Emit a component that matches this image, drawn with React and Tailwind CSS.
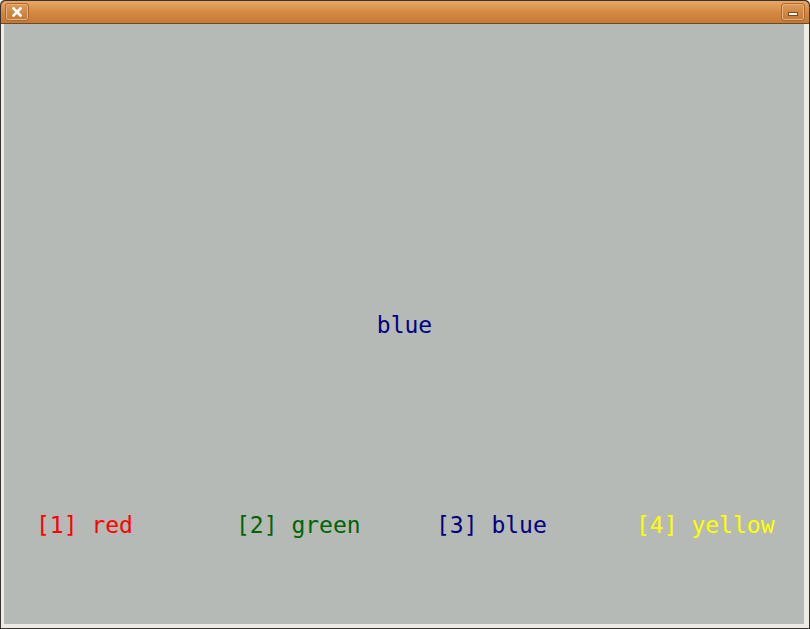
import React from "react";

const items = [
  { key: "1", label: "red", color: "text-[#ff0000]" },
  { key: "2", label: "green", color: "text-[#006400]" },
  { key: "3", label: "blue", color: "text-[#000080]" },
  { key: "4", label: "yellow", color: "text-[#ffff00]" },
];

const App = () => {
  return (
    <div className="w-[810px] h-[629px] flex flex-col bg-[#3a3430] rounded-t-[5px] overflow-hidden font-['DejaVu_Sans_Mono',monospace]">
      {/* title bar */}
      <div className="h-[23px] shrink-0 flex items-center justify-between px-[4px] border-b border-[#6b4a24] bg-gradient-to-b from-[#e9a767] via-[#d58a42] to-[#c47a36] rounded-t-[5px] mx-[1px] mt-[1px]">
        <div className="w-[24px] h-[18px] rounded-[3px] border border-[#a86a30] bg-gradient-to-b from-[#dc9a58] to-[#c47a38] shadow-[inset_0_0_0_1px_#eab07a] flex items-center justify-center">
          <svg width="10" height="10" viewBox="0 0 10 10">
            <path d="M1.5 1.5 L8.5 8.5 M8.5 1.5 L1.5 8.5" stroke="#fff" strokeWidth="2.6" strokeLinecap="square" />
          </svg>
        </div>
        <div className="w-[24px] h-[18px] rounded-[3px] border border-[#a86a30] bg-gradient-to-b from-[#dc9a58] to-[#c47a38] shadow-[inset_0_0_0_1px_#eab07a] flex items-end justify-center pb-[4px]">
          <div className="w-[10px] h-[4px] bg-white border border-[#7a4a1c]" />
        </div>
      </div>

      {/* window body */}
      <div className="flex-1 flex ml-[1px] mr-[1px] mb-[1px] bg-[#ecebe4] pl-[3px] pr-[5px] pb-[4px]">
        <div className="w-[800px] min-w-0 overflow-hidden flex flex-col bg-[#b6bab6] text-[23px] leading-none pt-[290px]">
          <div className="flex justify-center pl-[1px]">
            <span className="text-[#000080]">blue</span>
          </div>
          <div className="grid grid-cols-[repeat(4,200px)] pl-[32px] mt-[177px]">
            {items.map((it) => (
              <div key={it.key} className={`${it.color} whitespace-pre`}>
                [{it.key}] {it.label}
              </div>
            ))}
          </div>
        </div>
      </div>
    </div>
  );
};

export default App;
